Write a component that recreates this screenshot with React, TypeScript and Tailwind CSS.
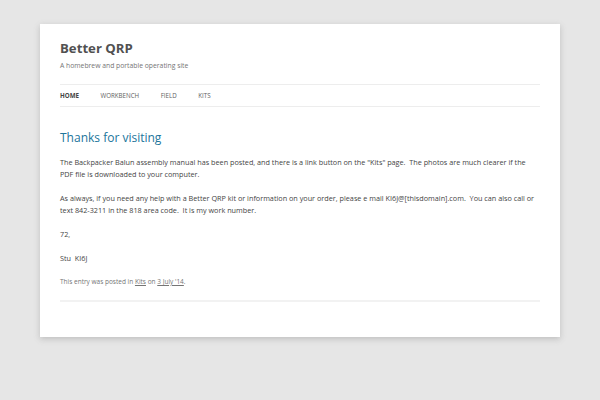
export default function App() {
  const nav = ['Home', 'Workbench', 'Field', 'Kits'];
  return (
    <div className="min-h-[400px] bg-[#e6e6e6] pt-6 font-['Open_Sans',sans-serif] text-[#444]">
      <div className="mx-10 h-[313px] bg-white px-5 shadow-[0_2px_6px_rgba(100,100,100,0.3)]">
        {/* Header */}
        <header className="pt-4">
          <h1 className="text-[13.2px] font-bold leading-4 text-[#515151]">Better QRP</h1>
          <p className="mt-1 text-[6.8px] leading-3 text-[#757575]">A homebrew and portable operating site</p>
          <nav className="mt-3 flex h-[23px] items-center border-y border-[#ededed] text-[6.2px] uppercase text-[#5e5e5e]">
            {nav.map((item, i) => (
              <a
                key={item}
                className={i === 0 ? 'mr-[21.5px] font-bold text-[#444]' : 'mr-[21.5px]'}
              >
                {item}
              </a>
            ))}
          </nav>
        </header>

        {/* Post */}
        <article className="pt-[22px]">
          <h2 className="text-[12px] leading-[18px] text-[#21759b]">Thanks for visiting</h2>
          <div className="mt-[9px] space-y-3 text-[7.25px] leading-3">
            <p>
              The Backpacker Balun assembly manual has been posted, and there is a link button on the "Kits" page.&nbsp; The photos are much clearer if the PDF file is downloaded to your computer.
            </p>
            <p>
              As always, if you need any help with a Better QRP kit or information on your order, please e mail KI6J@[thisdomain].com.&nbsp; You can also call or text 842-3211 in the 818 area code.&nbsp; It is my work number.
            </p>
            <p>72,</p>
            <p>Stu&nbsp; KI6J</p>
            <p className="text-[6.5px] text-[#757575]">
              This entry was posted in <a className="underline">Kits</a> on <a className="underline">3 July '14</a>.
            </p>
          </div>
          <div className="mt-3 border-b-2 border-[#f2f2f2]" />
        </article>
      </div>
    </div>
  );
}
